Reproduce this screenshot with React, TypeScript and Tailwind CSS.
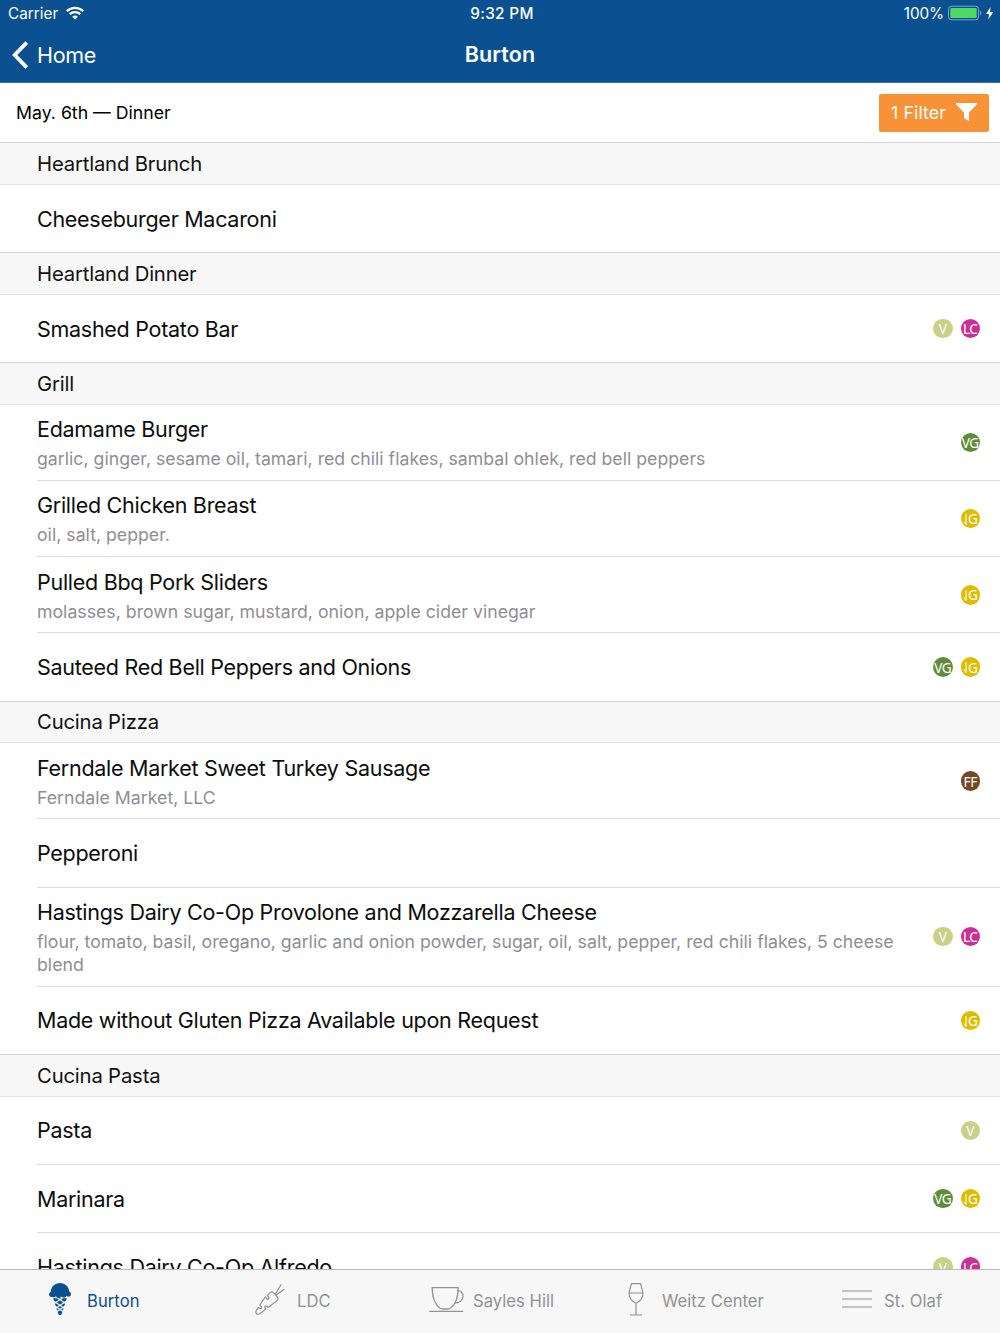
import { ReactNode } from "react";

type Tag = "V" | "LC" | "VG" | "LG" | "FF";

type Item = {
  name: string;
  info?: string;
  tall?: boolean;
  tags?: Tag[];
};

const menu: { title: string; items: Item[] }[] = [
  { title: "Heartland Brunch", items: [{ name: "Cheeseburger Macaroni" }] },
  { title: "Heartland Dinner", items: [{ name: "Smashed Potato Bar", tags: ["V", "LC"] }] },
  {
    title: "Grill",
    items: [
      {
        name: "Edamame Burger",
        info: "garlic, ginger, sesame oil, tamari, red chili flakes, sambal ohlek, red bell peppers",
        tags: ["VG"],
      },
      { name: "Grilled Chicken Breast", info: "oil, salt, pepper.", tags: ["LG"] },
      {
        name: "Pulled Bbq Pork Sliders",
        info: "molasses, brown sugar, mustard, onion, apple cider vinegar",
        tags: ["LG"],
      },
      { name: "Sauteed Red Bell Peppers and Onions", tags: ["VG", "LG"] },
    ],
  },
  {
    title: "Cucina Pizza",
    items: [
      { name: "Ferndale Market Sweet Turkey Sausage", info: "Ferndale Market, LLC", tags: ["FF"] },
      { name: "Pepperoni" },
      {
        name: "Hastings Dairy Co-Op Provolone and Mozzarella Cheese",
        info: "flour, tomato, basil, oregano, garlic and onion powder, sugar, oil, salt, pepper, red chili flakes, 5 cheese blend",
        tall: true,
        tags: ["V", "LC"],
      },
      { name: "Made without Gluten Pizza Available upon Request", tags: ["LG"] },
    ],
  },
  {
    title: "Cucina Pasta",
    items: [
      { name: "Pasta", tags: ["V"] },
      { name: "Marinara", tags: ["VG", "LG"] },
      { name: "Hastings Dairy Co-Op Alfredo", tags: ["V", "LC"] },
    ],
  },
];

const tagColors: Record<Tag, string> = {
  V: "bg-[#c8d185]",
  LC: "bg-[#ca2f97]",
  VG: "bg-[#608d38]",
  LG: "bg-[#dfbc00]",
  FF: "bg-[#754a20]",
};

function Badge({ tag }: { tag: Tag }) {
  return (
    <span
      className={`flex size-[19.5px] items-center justify-center overflow-hidden rounded-full pt-px font-['Noto_Sans',sans-serif] text-[13.6px] leading-none tracking-[-0.4px] text-white ${tagColors[tag]}`}
    >
      {tag === "LG" ? (
        <>
          <svg viewBox="0 0 4 12" className="mr-px h-3 w-1 shrink-0" fill="none" stroke="currentColor">
            <path d="M3 1v10.5L1.200 8.500" />
          </svg>
          G
        </>
      ) : (
        tag
      )}
    </span>
  );
}

function Row({ item, last }: { item: Item; last: boolean }) {
  const height = item.tall ? "h-[99px]" : item.info ? "h-[76.1px]" : "h-[68.3px]";
  return (
    <div className={`${height} shrink-0 ${last ? "" : "pl-[37px]"}`}>
      <div
        className={`flex h-full items-center border-b pr-5 ${last ? "border-[#d2d2d4] pl-[37px]" : "border-[#dcdcdf]"}`}
      >
        <div className="min-w-0 flex-1">
          <div className="text-[21.5px] leading-[30px] tracking-[-0.28px] text-[#0c0c0c]">{item.name}</div>
          {item.info && (
            <div className="-mb-[0.4px] w-[875px] pb-[0.8px] pt-[3px] text-[17.7px] leading-[23px] tracking-[0.01px] text-[#8e8e93]">
              {item.info}
            </div>
          )}
        </div>
        <div className="flex gap-2">{item.tags?.map((t) => <Badge key={t} tag={t} />)}</div>
      </div>
    </div>
  );
}

function Tab({ label, icon, className, active }: { label: string; icon: ReactNode; className: string; active?: boolean }) {
  return (
    <div className={`flex h-full w-[200px] items-center ${active ? "text-[#0b5091]" : "text-[#929292]"} ${className}`}>
      {icon}
      <span className="whitespace-nowrap text-[16.6px] tracking-[0.05px]">{label}</span>
    </div>
  );
}

function IceCream() {
  return (
    <svg viewBox="0 0 22 33" className="-mt-1 h-[33px] w-[22px] shrink-0">
      <path
        fill="currentColor"
        d="M11 0c5 0 9 3.7 9.3 8.8 1 .3 1.7 1.2 1.7 2.4 0 1.5-1 2.5-2.3 2.5-.9 0-1.6-.3-2.2-1-.6 1.3-1.5 2-2.8 2-1.2 0-2-.5-2.5-1.4-.5 1.3-1.3 1.9-2.4 1.9-1.3 0-2.3-.7-2.8-1.9-.7.7-1.5 1-2.5 1C1.1 14.3 0 13.1 0 11.5c0-1.3.7-2.3 1.8-2.6C2 3.7 6 0 11 0z"
      />
      <path fill="currentColor" d="M4.2 15.3h13.6L12.7 31c-.5 1.5-2.9 1.5-3.4 0z" />
      <path
        stroke="#f7f7f7"
        strokeWidth="1.1"
        fill="none"
        d="M3 17l12 8M8.5 15l9 6M5 22.5l9 6M19 17L7 25M13.5 15l-9 6M17 22.5l-9 6"
      />
    </svg>
  );
}

function Carrot() {
  return (
    <svg
      viewBox="0 0 30 32"
      className="-mt-1 h-8 w-[30px] shrink-0"
      fill="none"
      stroke="currentColor"
      strokeWidth="1.2"
      strokeLinejoin="round"
      strokeLinecap="round"
    >
      <path d="M15 8.7c1.3-1 2.5-1 3.6.1l3.8 4.2c1.1 1.3.9 2.7-.4 3.7L13 23.500l-1.300-1.300c-1.300-1-2.500.3-1.700 1.600l.9 1.300-6.200 4.600C2 31.300.1 29.300 1.200 26.900l1.900-3.500 1.600.9c1.400.7 2.500-.8 1.500-1.900l-1.500-1.300L10.200 13l1.600 1.700c1.300 1 2.700-.3 1.800-1.600l-1.200-1.700z" />
      <path d="M20.5 9.7L26 .8M21.5 11L29 5.300M20.500 9.700v1.100" />
    </svg>
  );
}

function Cup() {
  return (
    <svg viewBox="0 0 35 27" className="-mt-1 h-[27px] w-[35px] shrink-0" fill="none" stroke="currentColor" strokeWidth="1.3">
      <path d="M3.2 1.7h26c0 8-1.5 15.5-7.5 20.3-1 .7-2 1-3.2 1h-4.6c-1.2 0-2.2-.3-3.2-1C4.7 17.2 3.2 9.7 3.2 1.7z" />
      <path d="M29 4.7c3-.1 5 2.4 5 5.6 0 4-3.5 6.5-8 6.7M.3 25.4h34" />
    </svg>
  );
}

function Wine() {
  return (
    <svg viewBox="0 0 16 33" className="-mt-1 h-[33px] w-4 shrink-0" fill="none" stroke="currentColor" strokeWidth="1.2">
      <path d="M3.5.7h9c1.2 3.5 2.3 7 2.3 10.5 0 4-2.8 7-6.8 9-4-2-6.8-5-6.8-9 0-3.5 1.1-7 2.3-10.5zM1.2 10h13.6M8 20.2V32M2 32h12" />
    </svg>
  );
}

function Lines() {
  return (
    <svg viewBox="0 0 30 18" className="-mt-[5px] h-[18px] w-[30px] shrink-0" stroke="currentColor" strokeWidth="1.2">
      <path d="M0 1h30M0 9h30M0 17h30" />
    </svg>
  );
}

export default function App() {
  return (
    <div className="flex h-[1333px] w-[1000px] flex-col overflow-hidden bg-white font-['Inter',sans-serif] text-black">
      <header className="h-[83px] shrink-0 border-b border-[#3c72a5] bg-[#0b5091] text-white">
        <div className="grid h-[27px] grid-cols-3 items-center pl-2 pr-[6px] text-[15.3px]">
          <div className="flex items-center gap-2">
            <span className="pt-px">Carrier</span>
            <svg viewBox="0 0 18 14" className="-mt-px h-[14px] w-[18px]" fill="none" stroke="currentColor" strokeWidth="2.3">
              <path d="M.8 5.1c4.7-4.3 11.7-4.3 16.4 0M3.7 8.2c3-2.8 7.6-2.8 10.6 0" />
              <path d="M9 13.5L6.2 10.7c1.6-1.5 4-1.5 5.6 0z" fill="currentColor" stroke="none" />
            </svg>
          </div>
          <div className="pl-[2px] pt-px text-center font-medium tracking-[0.35px]">9:32 PM</div>
          <div className="flex items-center justify-end">
            <span className="mr-1 pt-px tracking-[-0.1px]">100%</span>
            <svg viewBox="0 0 46 16" className="-mt-px h-4 w-[46px]">
              <rect x=".5" y="1.2" width="30" height="13.6" rx="3" fill="none" stroke="#7da2c5" />
              <rect x="2.3" y="3" width="26.4" height="10" rx="1.3" fill="#4cd964" />
              <path d="M32 5.5c1.8.7 1.8 4.3 0 5z" fill="#7da2c5" />
              <path d="M42.5 2L38 9h3.2l-1 5.5L45.3 7H42z" fill="white" />
            </svg>
          </div>
        </div>
        <div className="grid h-[55px] grid-cols-3 items-center text-[21.5px]">
          <div className="flex items-center gap-[9px] pl-3">
            <svg viewBox="0 0 16 28" className="h-7 w-4" fill="none" stroke="currentColor" strokeWidth="3.8">
              <path d="M14.7 1.5L2.7 14l12 12.5" />
            </svg>
            <span className="pt-px tracking-[-0.3px]">Home</span>
          </div>
          <div className="text-center font-semibold tracking-[0.1px]">Burton</div>
        </div>
      </header>

      <div className="flex h-[60.4px] shrink-0 items-center justify-between border-b border-[#d4d4d6] pl-4 pr-[11px]">
        <div className="pt-px text-[17.7px]">May. 6th — Dinner</div>
        <button className="flex h-[38px] w-[110px] items-center justify-between rounded-[2px] bg-[#f89236] px-3 text-[17.8px] tracking-[0.1px] text-white">
          <span className="pt-px">1 Filter</span>
          <svg viewBox="0 0 21 18" className="-mt-px h-[18px] w-[21px]" fill="currentColor">
            <path d="M0 0h21v1.2L13 9.5V18l-5-2.8V9.5L0 1.2z" />
          </svg>
        </button>
      </div>

      <main className="flex min-h-0 flex-1 flex-col overflow-hidden">
        {menu.map((section) => (
          <section key={section.title} className="flex shrink-0 flex-col">
            <h2 className="flex h-[41.7px] items-center border-b border-[#e4e4e6] bg-[#f7f7f7] pl-[37px] pt-px text-[20.3px] tracking-[-0.18px] text-[#111]">
              {section.title}
            </h2>
            {section.items.map((item, i) => (
              <Row key={item.name} item={item} last={i === section.items.length - 1} />
            ))}
          </section>
        ))}
      </main>

      <nav className="flex h-16 shrink-0 items-center border-t border-[#b9b9bb] bg-[#f7f7f7]">
        <Tab label="Burton" icon={<IceCream />} className="gap-4 pl-[49px]" active />
        <Tab label="LDC" icon={<Carrot />} className="gap-3 pl-[55px]" />
        <Tab label="Sayles Hill" icon={<Cup />} className="gap-[9px] pl-[29px]" />
        <Tab label="Weitz Center" icon={<Wine />} className="gap-[18px] pl-[28px]" />
        <Tab label="St. Olaf" icon={<Lines />} className="gap-[12px] pl-[42px]" />
      </nav>
    </div>
  );
}
